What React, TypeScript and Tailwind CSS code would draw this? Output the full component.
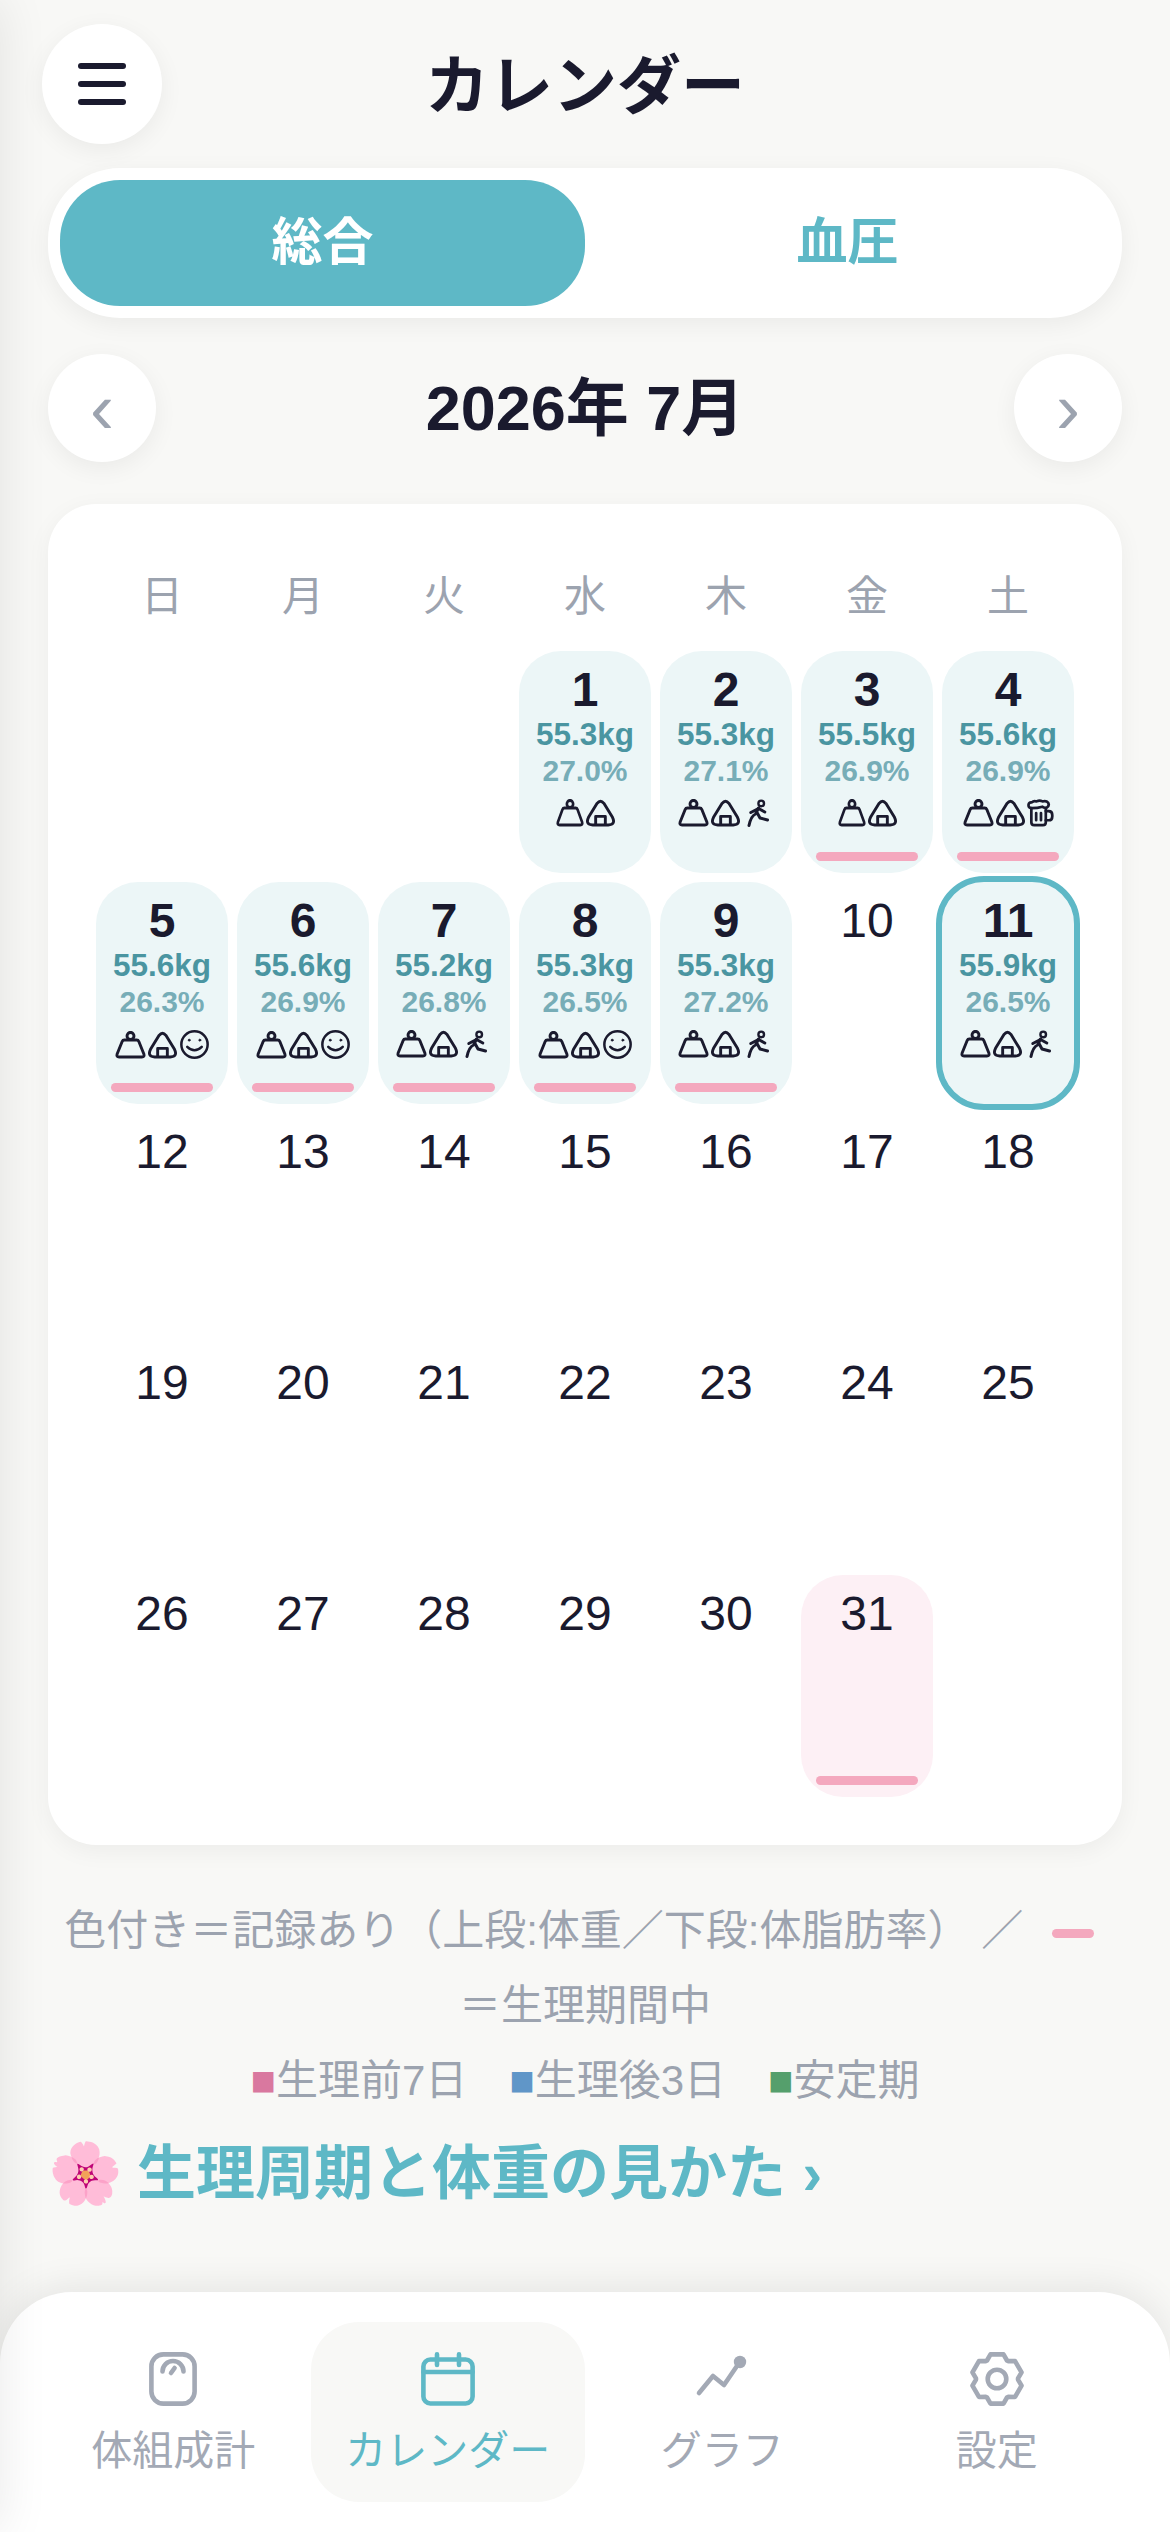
const DARK = "#1a1a2e";

type Mark = "weight" | "rice" | "run" | "smile" | "beer";

type Day = {
  d: number;
  kg?: string;
  fat?: string;
  marks?: Mark[];
  period?: boolean;
  today?: boolean;
};

const days: Day[] = [
  { d: 1, kg: "55.3kg", fat: "27.0%", marks: ["weight", "rice"] },
  { d: 2, kg: "55.3kg", fat: "27.1%", marks: ["weight", "rice", "run"] },
  { d: 3, kg: "55.5kg", fat: "26.9%", marks: ["weight", "rice"], period: true },
  { d: 4, kg: "55.6kg", fat: "26.9%", marks: ["weight", "rice", "beer"], period: true },
  { d: 5, kg: "55.6kg", fat: "26.3%", marks: ["weight", "rice", "smile"], period: true },
  { d: 6, kg: "55.6kg", fat: "26.9%", marks: ["weight", "rice", "smile"], period: true },
  { d: 7, kg: "55.2kg", fat: "26.8%", marks: ["weight", "rice", "run"], period: true },
  { d: 8, kg: "55.3kg", fat: "26.5%", marks: ["weight", "rice", "smile"], period: true },
  { d: 9, kg: "55.3kg", fat: "27.2%", marks: ["weight", "rice", "run"], period: true },
  { d: 10 },
  { d: 11, kg: "55.9kg", fat: "26.5%", marks: ["weight", "rice", "run"], today: true },
  ...Array.from({ length: 19 }, (_, i) => ({ d: i + 12 })),
  { d: 31, period: true },
];

function MarkIcon({ name, narrow }: { name: Mark; narrow: boolean }) {
  if (name === "weight") {
    return (
      <svg viewBox="0 0 32 28" preserveAspectRatio="none" className={narrow ? "w-[28px] h-[28px]" : "w-[31px] h-[28px]"} fill="none" stroke={DARK} strokeWidth="3">
        <circle cx="16" cy="5" r="3.6" />
        <path d="M9.6 9H22.4Q24 9 24.6 10.5L29.8 23Q30.8 26 27.8 26H4.2Q1.2 26 2.2 23L7.4 10.5Q8 9 9.6 9Z" strokeLinejoin="round" />
      </svg>
    );
  }
  if (name === "rice") {
    return (
      <svg viewBox="0 0 30 28" className="w-[29px] h-[28px]" fill="none" stroke={DARK} strokeWidth="3" strokeLinejoin="round">
        <path d="M11.5 4Q15 -0.4 18.5 4L27.4 18.5Q31 26 23 26.4H7Q-1 26 2.6 18.5Z" />
        <path d="M10 26V17.5H20V26" />
      </svg>
    );
  }
  if (name === "smile") {
    return (
      <svg viewBox="0 0 32 30" className="w-[31px] h-[29px]" fill="none" stroke={DARK} strokeWidth="2.6" strokeLinecap="round">
        <circle cx="16" cy="15" r="13.6" />
        <path d="M8.5 17.5Q16 24.5 23.5 17.5" />
        <circle cx="10.5" cy="10.5" r="1" fill={DARK} strokeWidth="1" />
        <circle cx="21.5" cy="10.5" r="1" fill={DARK} strokeWidth="1" />
      </svg>
    );
  }
  if (name === "run") {
    return (
      <svg viewBox="0 0 22 28" className="w-[22px] h-[28px] mx-[5px]" fill="none" stroke={DARK} strokeWidth="3" strokeLinecap="round" strokeLinejoin="round">
        <circle cx="14.2" cy="4.4" r="2.8" strokeWidth="2.4" />
        <path d="M11.5 9L8.5 15Q4 17 2 26.5" />
        <path d="M3.8 13.5L11.5 9.5L17.8 13" />
        <path d="M10 13.5L13 19L20.5 21" />
      </svg>
    );
  }
  return (
    <svg viewBox="0 0 28 28" className="w-[27px] h-[28px]" fill="none" stroke={DARK} strokeWidth="2.8" strokeLinecap="round" strokeLinejoin="round">
      <path d="M4.5 9V23.5Q4.5 26.5 7.5 26.5H16.5Q19.5 26.5 19.5 23.5V9" />
      <path d="M4.5 9Q1.2 8.6 1.6 5.4Q2 2.6 5 3Q7 .8 10 2Q13 .4 16 2Q20 .8 22 3.4Q23.6 6.6 20.5 8.4Q17.5 9 16 7.5Q11 9 4.5 9Z" />
      <path d="M19.5 12H22.5Q26.2 12 26.2 16V17.5Q26.2 21.5 22.5 21.5H19.5" />
      <path d="M9.5 14V21.5M14.5 14V21.5" />
    </svg>
  );
}

function DayCell({ day }: { day: Day }) {
  const hasRecord = !!day.kg;
  let bg = "";
  if (hasRecord) bg = "bg-[#ecf6f7]";
  else if (day.period) bg = "bg-[#fdf0f5]";

  return (
    <div className={`flex flex-col items-center rounded-[42px] ${bg} ${day.today ? "outline-[6px] outline-solid outline-[#5eb8c6]" : ""}`}>
      <div className={`pt-[12px] text-[48px] leading-[54px] text-[#1a1a2e] ${hasRecord ? "font-bold" : ""}`}>{day.d}</div>
      {hasRecord && (
        <>
          <div className="text-[31.5px] leading-[35px] font-bold text-[#4a95a1]">{day.kg}</div>
          <div className="text-[30px] leading-[37px] font-bold text-[#77adb7]">{day.fat}</div>
          <div className="mt-[10px] flex items-center gap-[2px]">
            {day.marks?.map((m, i) => <MarkIcon key={i} name={m} narrow={day.marks?.length === 2} />)}
          </div>
        </>
      )}
      {day.period && <div className="mt-auto mb-[12px] h-[9px] w-[102px] rounded-full bg-[#f4a8be]" />}
    </div>
  );
}

// six flat topped teeth, drawn around the centre of a 54 box
const gearPath = Array.from({ length: 6 }, (_, i) => {
  const a = (i * Math.PI) / 3;
  const pt = (r: number, t: number) =>
    `${(27 + r * Math.sin(a) + t * Math.cos(a)).toFixed(2)} ${(27 - r * Math.cos(a) + t * Math.sin(a)).toFixed(2)}`;
  return `${pt(18.5, -10)} ${pt(24.6, -6.5)} ${pt(24.6, 6.5)} ${pt(18.5, 10)}`;
}).join(" ");

function NavItem({ label, active, children }: { label: string; active?: boolean; children: React.ReactNode }) {
  return (
    <div className={`flex h-[180px] flex-1 flex-col items-center rounded-[48px] pt-[30px] ${active ? "bg-[#f8f8f6] text-[#5eb8c6]" : "text-[#a3a9b5]"}`}>
      {children}
      <div className="mt-[21px] text-[41px] leading-[48px]">{label}</div>
    </div>
  );
}

export default function App() {
  return (
    <div className="relative flex h-[2532px] w-[1170px] flex-col overflow-hidden bg-[#f8f8f6] font-['Liberation_Sans','Noto_Sans_CJK_JP',sans-serif]">
      {/* closed drawer sitting off screen, only its shadow shows */}
      <div className="absolute top-0 right-full z-10 h-full w-[300px] shadow-[0_0_48px_rgba(0,0,0,0.09)]" />

      <header className="flex items-center px-[42px] pt-[24px]">
        <button className="flex h-[120px] w-[120px] flex-col items-center justify-center gap-[12px] rounded-full bg-white shadow-[0_6px_24px_rgba(0,0,0,0.06)]">
          <span className="h-[6px] w-[48px] rounded-full bg-[#1a1a2e]" />
          <span className="h-[6px] w-[48px] rounded-full bg-[#1a1a2e]" />
          <span className="h-[6px] w-[48px] rounded-full bg-[#1a1a2e]" />
        </button>
        <h1 className="flex-1 pt-[3px] text-center text-[64px] font-bold text-[#1a1a2e]">カレンダー</h1>
        <div className="w-[120px]" />
      </header>

      <div className="mx-[48px] mt-[24px] flex h-[150px] rounded-[72px] bg-white p-[12px] shadow-[0_6px_24px_rgba(0,0,0,0.06)]">
        <div className="flex flex-1 items-center justify-center rounded-[60px] bg-[#5eb8c6] text-[51px] font-bold text-white">総合</div>
        <div className="flex flex-1 items-center justify-center text-[51px] font-bold text-[#5eb8c6]">血圧</div>
      </div>

      <div className="mx-[48px] mt-[36px] flex items-center justify-between">
        <button className="flex h-[108px] w-[108px] items-center justify-center rounded-full bg-white text-[72px] text-[#9ca3af] shadow-[0_6px_24px_rgba(0,0,0,0.06)]">‹</button>
        <div className="text-[63px] font-bold text-[#1a1a2e]">2026年 7月</div>
        <button className="flex h-[108px] w-[108px] items-center justify-center rounded-full bg-white text-[72px] text-[#9ca3af] shadow-[0_6px_24px_rgba(0,0,0,0.06)]">›</button>
      </div>

      <section className="mx-[48px] mt-[42px] rounded-[48px] bg-white p-[48px] shadow-[0_6px_24px_rgba(0,0,0,0.05)]">
        <div className="grid grid-cols-7 gap-x-[9px]">
          {["日", "月", "火", "水", "木", "金", "土"].map((w) => (
            <div key={w} className="h-[90px] pt-[21px] text-center text-[42px] leading-[48px] text-[#9ca3af]">{w}</div>
          ))}
        </div>
        <div className="mt-[9px] grid grid-cols-7 auto-rows-[222px] gap-[9px]">
          <div />
          <div />
          <div />
          {days.map((day) => <DayCell key={day.d} day={day} />)}
        </div>
      </section>

      <div className="mt-[48px] px-[48px] text-center text-[42px] leading-[75px] text-[#9ca3af]">
        <p>
          色付き＝記録あり（上段:体重／下段:体脂肪率） ／ <span className="ml-[17px] mr-[12px] inline-block h-[9px] w-[42px] rounded-full bg-[#f4a8be] align-middle" /> ＝生理期間中
        </p>
        <p className="flex justify-center gap-[42px]">
          <span><span className="text-[#d9789f]">■</span>生理前7日</span>
          <span><span className="text-[#6096c8]">■</span>生理後3日</span>
          <span><span className="text-[#559f6c]">■</span>安定期</span>
        </p>
      </div>

      <a className="mx-[48px] mt-[16px] text-[59px] leading-[80px] font-bold text-[#5eb8c6]">
        <span className="mr-[14px] text-[60px]">🌸</span>生理周期と体重の見かた ›
      </a>

      <nav className="mt-auto h-[240px] rounded-t-[72px] bg-white px-[36px] pt-[30px] shadow-[0_-6px_36px_rgba(0,0,0,0.08)]">
        <div className="flex">
          <NavItem label="体組成計">
            <svg viewBox="0 0 48 54" className="h-[54px] w-[48px]" fill="none" stroke="currentColor" strokeWidth="4.6" strokeLinecap="round">
              <rect x="2.4" y="2.4" width="43.2" height="49.2" rx="12" />
              <path d="M13.5 19.5A10.5 10.5 0 0 1 34.5 19.5" />
              <path d="M22 21L25.6 16" />
            </svg>
          </NavItem>
          <NavItem label="カレンダー" active>
            <svg viewBox="0 0 54 54" className="h-[54px] w-[54px]" fill="none" stroke="currentColor" strokeWidth="4.6" strokeLinecap="round">
              <rect x="2.4" y="7.5" width="49.2" height="44" rx="7" />
              <path d="M16 2.4V13M38 2.4V13M2.4 20H51.6" />
            </svg>
          </NavItem>
          <NavItem label="グラフ">
            <svg viewBox="0 0 54 54" className="h-[54px] w-[54px]" fill="none" stroke="currentColor" strokeWidth="4.6" strokeLinecap="round" strokeLinejoin="round">
              <path d="M4 41L18 24L29 33L44 11" />
              <circle cx="45" cy="10" r="6.2" fill="currentColor" stroke="none" />
            </svg>
          </NavItem>
          <NavItem label="設定">
            <svg viewBox="0 0 54 54" className="h-[54px] w-[54px]" fill="none" stroke="currentColor" strokeWidth="4.6" strokeLinejoin="round">
              <polygon points={gearPath} />
              <circle cx="27" cy="27" r="9.3" />
            </svg>
          </NavItem>
        </div>
      </nav>
    </div>
  );
}
